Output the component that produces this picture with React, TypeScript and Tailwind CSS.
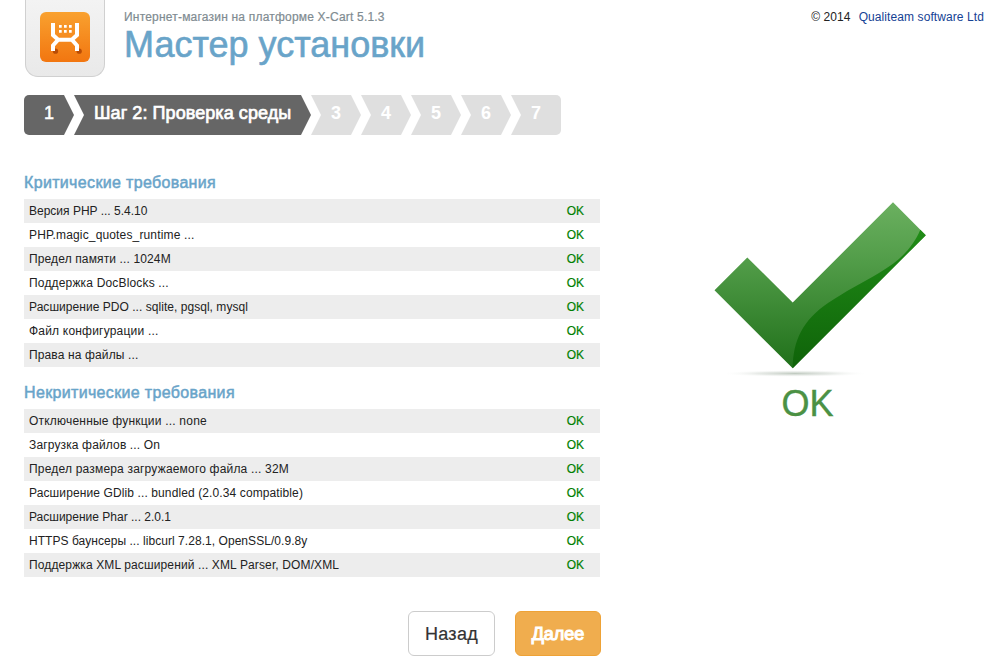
const critical = [
  { label: 'Версия PHP ... 5.4.10', spacing: 'tracking-normal' },
  { label: 'PHP.magic_quotes_runtime ...', spacing: 'tracking-[0.15px]' },
  { label: 'Предел памяти ... 1024M', spacing: 'tracking-[0.13px]' },
  { label: 'Поддержка DocBlocks ...', spacing: 'tracking-[0.17px]' },
  { label: 'Расширение PDO ... sqlite, pgsql, mysql', spacing: 'tracking-[0.04px]' },
  { label: 'Файл конфигурации ...', spacing: 'tracking-[0.2px]' },
  { label: 'Права на файлы ...', spacing: 'tracking-[0.13px]' },
];

const optional = [
  { label: 'Отключенные функции ... none', spacing: 'tracking-[0.21px]' },
  { label: 'Загрузка файлов ... On', spacing: 'tracking-[0.14px]' },
  { label: 'Предел размера загружаемого файла ... 32M', spacing: 'tracking-[0.19px]' },
  { label: 'Расширение GDlib ... bundled (2.0.34 compatible)', spacing: 'tracking-[0.11px]' },
  { label: 'Расширение Phar ... 2.0.1', spacing: 'tracking-normal' },
  { label: 'HTTPS баунсеры ... libcurl 7.28.1, OpenSSL/0.9.8y', spacing: 'tracking-[0.05px]' },
  { label: 'Поддержка XML расширений ... XML Parser, DOM/XML', spacing: 'tracking-[0.125px]' },
];

function Logo() {
  return (
    <div className="h-[77px] w-20 rounded-b-[13px] border border-t-0 border-[#d0d0d0] bg-gradient-to-b from-[#f3f3f3] to-[#e9e9e9] pl-[14px] pt-3">
      <svg width="50" height="50" viewBox="0 0 50 50">
        <defs>
          <linearGradient id="logo" x1="0" y1="0" x2="0" y2="1">
            <stop offset="0" stopColor="#f9a12f" />
            <stop offset="1" stopColor="#f27610" />
          </linearGradient>
        </defs>
        <rect width="50" height="50" rx="6" fill="url(#logo)" />
        <circle cx="15.5" cy="39.2" r="2.6" fill="#b94c05" />
        <circle cx="39.2" cy="39.2" r="2.6" fill="#b94c05" />
        <path d="M13 11V23L18.200 27.700H31.800L37 23V11M18.200 27.700L13 33.500V39M31.800 27.700L37 33.500V39" fill="none" stroke="#fff" strokeWidth="4" />
        <path d="M19 13h2.700v2.700h-2.700zM24 13h2.700v2.700h-2.700zM29 13h2.700v2.700h-2.700zM19 18h2.700v2.700h-2.700zM24 18h2.700v2.700h-2.700zM29 18h2.700v2.700h-2.700z" fill="#fff" />
      </svg>
    </div>
  );
}

function Steps() {
  return (
    <ol className="mt-[18px] flex h-10 text-[18px] leading-9 text-white">
      <li className="w-[50px] rounded-l-[5px] bg-[#666] text-center [clip-path:polygon(0_0,40px_0,50px_50%,40px_100%,0_100%)] [-webkit-text-stroke:0.5px_white]">1</li>
      <li className="w-[237px] whitespace-nowrap bg-[#666] pl-5 tracking-[0.07px] [clip-path:polygon(0_0,227px_0,237px_50%,227px_100%,0_100%,10px_50%)] [-webkit-text-stroke:0.7px_white]">Шаг 2: Проверка среды</li>
      {[3, 4, 5, 6].map((n) => (
        <li key={n} className="w-[50px] bg-[#dfdfdf] text-center font-bold [clip-path:polygon(0_0,40px_0,50px_50%,40px_100%,0_100%,10px_50%)]">{n}</li>
      ))}
      <li className="w-[50px] rounded-r-[5px] bg-[#dfdfdf] text-center font-bold [clip-path:polygon(0_0,100%_0,100%_100%,0_100%,10px_50%)]">7</li>
    </ol>
  );
}

function Requirements({ title, rows }: { title: string; rows: typeof critical }) {
  return (
    <section>
      <h2 className="h-[33px] text-[16px] leading-[33px] tracking-[0.34px] text-[#69a4c9] [-webkit-text-stroke:0.5px_#69a4c9]">{title}</h2>
      {rows.map((row) => (
        <div key={row.label} className="flex h-6 justify-between pl-[5px] pr-4 text-[12px] leading-6 odd:bg-white even:bg-[#ededed]">
          <span className={'whitespace-nowrap ' + row.spacing}>{row.label}</span>
          <span className="text-[#008000] [-webkit-text-stroke:0.2px_#008000]">OK</span>
        </div>
      ))}
    </section>
  );
}

function CheckMark() {
  return (
    <svg width="220" height="184" viewBox="710 198 220 184">
      <defs>
        <linearGradient id="light" gradientUnits="userSpaceOnUse" x1="0" y1="202" x2="0" y2="368">
          <stop offset="0" stopColor="#6bb060" />
          <stop offset=".35" stopColor="#529d49" />
          <stop offset="1" stopColor="#20701a" />
        </linearGradient>
        <linearGradient id="dark" gradientUnits="userSpaceOnUse" x1="0" y1="230" x2="0" y2="368">
          <stop offset="0" stopColor="#208c17" />
          <stop offset="1" stopColor="#0f6309" />
        </linearGradient>
        <radialGradient id="shade">
          <stop offset="0" stopColor="#c0cac0" />
          <stop offset=".5" stopColor="#dde2dd" stopOpacity=".7" />
          <stop offset="1" stopColor="#fff" stopOpacity="0" />
        </radialGradient>
      </defs>
      <ellipse cx="795" cy="373.500" rx="74" ry="3.500" fill="url(#shade)" />
      <path d="M714.500 290.300 747.300 257.500 792.700 302.500 893 202.300 925.800 235.200 792.700 368.300Z" fill="url(#light)" />
      <path d="M792.700 368.300C793 340 803 320 828 303C846 291 862 283 879 273C901 260 913 247 920.300 229.800L925.800 235.200Z" fill="url(#dark)" />
    </svg>
  );
}

export default function App() {
  return (
    <div className="h-[670px] w-[994px] overflow-hidden bg-white pl-6 font-['Liberation_Sans',Arial,sans-serif] text-[#222]">
      <header className="flex pl-px pr-[10px]">
        <Logo />
        <div className="flex-1 pl-[19px] pt-2">
          <p className="text-[12px] leading-[18px] tracking-[0.2px] text-[#808b91] [-webkit-text-stroke:0.2px_#808b91]">Интернет-магазин на платформе X-Cart 5.1.3</p>
          <h1 className="text-[36px] leading-[38px] text-[#69a4c9] [-webkit-text-stroke:0.6px_#69a4c9]">Мастер установки</h1>
        </div>
        <p className="flex gap-2 pt-2 text-[12px] leading-[18px]">
          <span className="tracking-[0.08px]">© 2014</span>
          <a className="tracking-[0.09px] text-[#154294]">Qualiteam software Ltd</a>
        </p>
      </header>
      <Steps />
      <main className="mt-[31px] flex">
        <div className="flex w-[576px] flex-col gap-[9px]">
          <Requirements title="Критические требования" rows={critical} />
          <Requirements title="Некритические требования" rows={optional} />
        </div>
        <aside className="ml-[110px] flex w-[220px] flex-col items-center pt-8">
          <CheckMark />
          <p className="mt-[3px] pr-[25px] text-[36px] leading-[38px] text-[#4b9144] [-webkit-text-stroke:0.4px_#4b9144]">OK</p>
        </aside>
      </main>
      <div className="mt-[34px] flex w-[577px] justify-end gap-5">
        <button className="h-[45px] w-[87px] rounded-[6px] border border-[#ccc] bg-white pt-0.5 text-[18px] tracking-[0.3px] text-[#333] [-webkit-text-stroke:0.2px_#333]">Назад</button>
        <button className="h-[45px] w-[86px] rounded-[6px] border border-[#eea236] bg-[#f0ad4e] pt-0.5 text-[18px] text-white [-webkit-text-stroke:1.1px_white]">Далее</button>
      </div>
    </div>
  );
}
